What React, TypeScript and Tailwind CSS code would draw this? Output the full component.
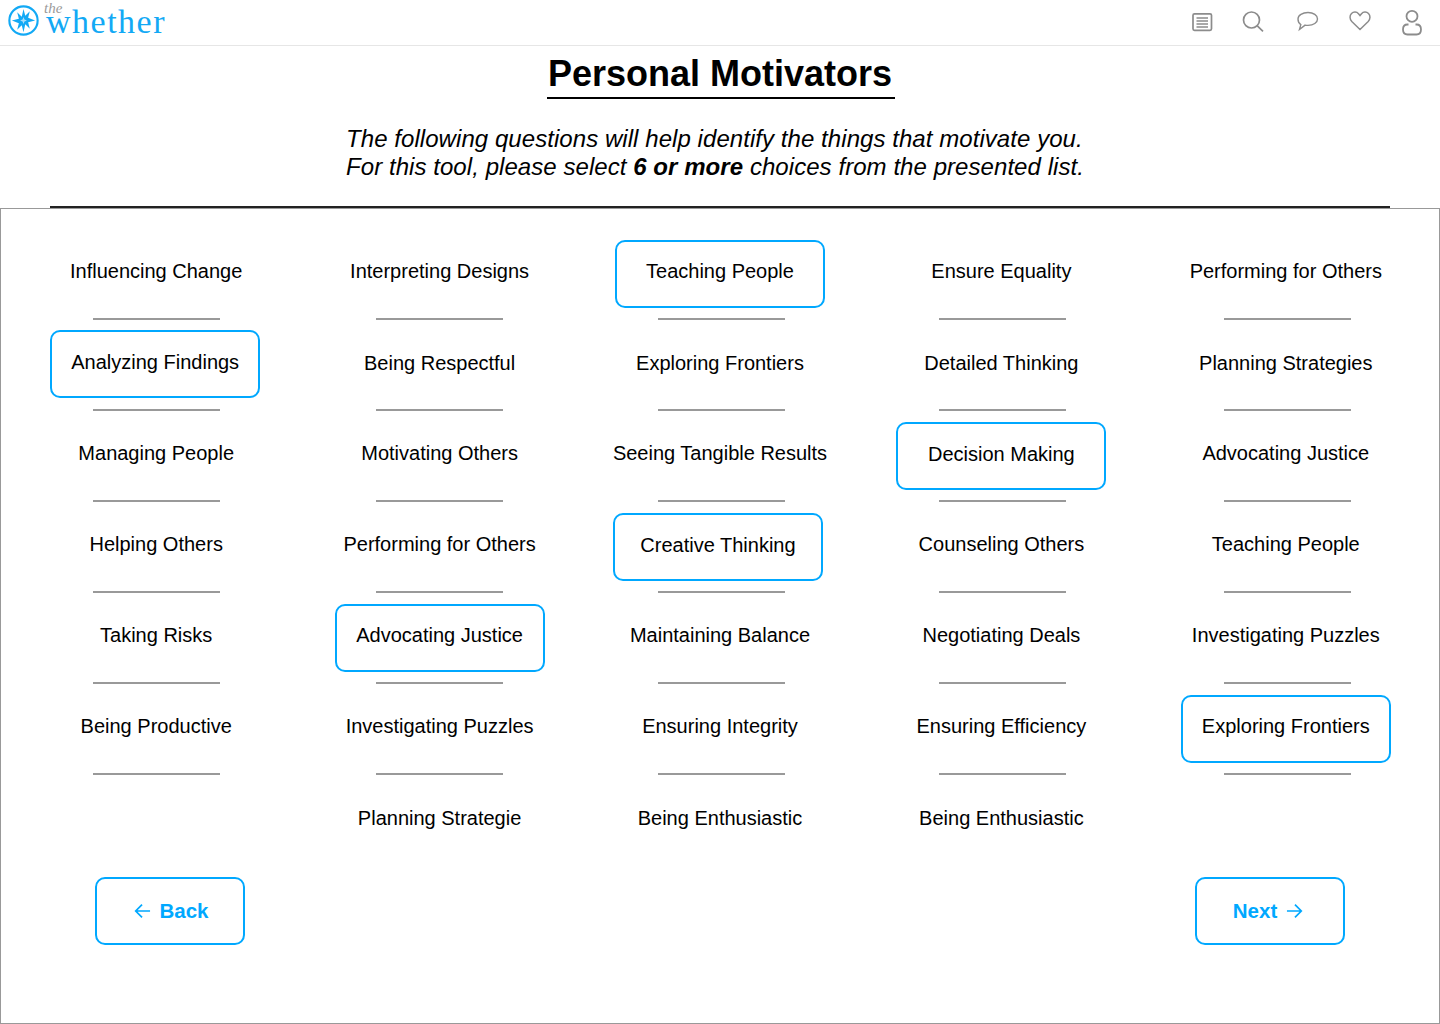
const columns = [
  {
    wrap: "",
    rule: "",
    items: [
      { label: "Influencing Change" },
      { label: "Analyzing Findings", selected: true, nudge: "-translate-x-px -translate-y-px" },
      { label: "Managing People" },
      { label: "Helping Others" },
      { label: "Taking Risks" },
      { label: "Being Productive" },
    ],
  },
  {
    wrap: "pl-[2px]",
    rule: "",
    items: [
      { label: "Interpreting Designs" },
      { label: "Being Respectful" },
      { label: "Motivating Others" },
      { label: "Performing for Others" },
      { label: "Advocating Justice", selected: true },
      { label: "Investigating Puzzles" },
      { label: "Planning Strategie" },
    ],
  },
  {
    wrap: "pr-[2px]",
    rule: "translate-x-0.5",
    items: [
      { label: "Teaching People", selected: true },
      { label: "Exploring Frontiers" },
      { label: "Seeing Tangible Results" },
      { label: "Creative Thinking", selected: true, nudge: "-translate-x-0.5" },
      { label: "Maintaining Balance" },
      { label: "Ensuring Integrity" },
      { label: "Being Enthusiastic" },
    ],
  },
  {
    wrap: "pr-[4px]",
    rule: "translate-x-px",
    items: [
      { label: "Ensure Equality" },
      { label: "Detailed Thinking" },
      { label: "Decision Making", selected: true },
      { label: "Counseling Others" },
      { label: "Negotiating Deals" },
      { label: "Ensuring Efficiency" },
      { label: "Being Enthusiastic" },
    ],
  },
  {
    wrap: "",
    rule: "translate-x-0.5",
    items: [
      { label: "Performing for Others" },
      { label: "Planning Strategies" },
      { label: "Advocating Justice" },
      { label: "Teaching People" },
      { label: "Investigating Puzzles" },
      { label: "Exploring Frontiers", selected: true },
    ],
  },
];

function Compass() {
  return (
    <svg width="31" height="31" viewBox="0 0 32 32" fill="none" className="shrink-0 -mt-[4px]">
      <circle cx="16" cy="16" r="14.6" stroke="#12a9f5" strokeWidth="2.2" />
      <path
        d="M16 4l1.800 7.200 4.700-4.700-1.700 6.700L28 16l-7.200 1.800 1.700 6.700-4.700-4.700L16 28l-1.800-7.200-4.700 4.700 1.700-6.700L4 16l7.200-1.800-1.700-6.700 4.700 4.700z"
        fill="#12a9f5"
      />
      <path d="M16 12.500l1 2.500 2.500 1-2.500 1-1 2.500-1-2.500-2.500-1 2.500-1z" fill="#a9def9" />
    </svg>
  );
}

function Logo() {
  return (
    <div className="relative flex items-center gap-[7px] pl-2">
      <Compass />
      <span className="font-['Liberation_Serif',serif] text-[34px] leading-[18px] tracking-[1.5px] text-[#12a9f5] -translate-y-px">
        whether
      </span>
      <span className="absolute left-[44px] top-[-7px] font-['Liberation_Serif',serif] italic text-[15px] leading-[12px] text-[#9a9a9a]">
        the
      </span>
    </div>
  );
}

function NavIcons() {
  return (
    <div className="flex items-center gap-[30px] pr-[18px] text-[#8c8c8c]">
      <svg width="22" height="26" viewBox="0 0 22 26" fill="none" stroke="currentColor" strokeWidth="1.700" className="overflow-visible">
        <rect x="1" y="3.800" width="18.500" height="16.500" rx="1.500" />
        <path d="M4.500 8h11.500M4.500 11h11.500M4.500 14h11.500M4.500 17h11.500" strokeWidth="1.300" />
      </svg>
      <svg width="22" height="26" viewBox="0 0 22 26" fill="none" stroke="currentColor" strokeWidth="1.700" className="overflow-visible">
        <circle cx="7.500" cy="10" r="8" />
        <path d="M13.300 15.800l5.700 5.600" />
      </svg>
      <svg width="22" height="26" viewBox="0 0 22 26" fill="none" stroke="currentColor" strokeWidth="1.400" className="overflow-visible">
        <path d="M12 2.500c5.500 0 9.500 2.800 9.500 6.400s-4 6.500-9.500 6.500c-1 0-2-.1-2.900-.3L3.500 19.500l1.300-4.900C3 13.400 2 11.300 2 8.900 2 5.300 6.500 2.500 12 2.500z" />
      </svg>
      <svg width="22" height="26" viewBox="0 0 22 26" fill="none" stroke="currentColor" strokeWidth="1.500" className="overflow-visible">
        <path d="M12 19.500L3.800 11.500C1.500 9 1.500 5.500 3.500 3.500c2-2 5.200-1.800 7 .2L12 5.500l1.500-1.800c1.800-2 5-2.200 7-.2 2 2 2 5.500-.3 8z" />
      </svg>
      <svg width="22" height="26" viewBox="0 0 22 26" fill="none" stroke="currentColor" strokeWidth="1.800" className="overflow-visible">
        <circle cx="12" cy="6.300" r="5.500" />
        <path d="M8.500 14.500H7.500C4.800 14.500 3 16.500 3 19.500s1.800 5 4.500 5h9c2.700 0 4.500-2 4.500-5s-1.800-5-4.500-5h-1" />
      </svg>
    </div>
  );
}

type ItemProps = {
  label: string;
  selected?: boolean;
  nudge?: string;
  rule: string;
  row: number;
};

function Item({ label, selected, nudge, rule, row }: ItemProps) {
  const liftSelected = row >= 1 && row <= 3;
  const liftPlain = row === 1 || row === 6;
  return (
    <div className="flex flex-col items-center h-[91px]">
      <div
        className={
          selected
            ? `h-[68px] w-[210px] rounded-[10px] border-2 border-[#00a8ff] flex items-center justify-center ${liftSelected ? "pb-[5px]" : "pb-[7px]"} ${nudge ?? ""}`
            : `h-[68px] w-[240px] flex items-center justify-center ${liftPlain ? "pb-[5px]" : "pb-[7px]"}`
        }
      >
        {label}
      </div>
      {row !== 6 && <div className={`mt-[10px] h-0.5 w-[127px] bg-[#999999] ${rule}`} />}
    </div>
  );
}

function NavButton({ label, dir }: { label: string; dir: "back" | "next" }) {
  return (
    <button
      className={`h-[68px] w-[150px] rounded-[10px] border-2 border-[#00a8ff] flex items-center justify-center text-[#00a8ff] text-[20.5px] font-bold ${
        dir === "back" ? "gap-[8px] pl-[3px]" : "gap-[9px] pr-[4px]"
      }`}
    >
      {dir === "back" && (
        <svg width="17" height="16" viewBox="0 0 18 16" fill="none" stroke="currentColor" strokeWidth="1.800">
          <path d="M17 8H2M8.500 1.200L1.800 8l6.700 6.800" />
        </svg>
      )}
      {label}
      {dir === "next" && (
        <svg width="17" height="16" viewBox="0 0 18 16" fill="none" stroke="currentColor" strokeWidth="1.800">
          <path d="M1 8h15M9.500 1.200L16.200 8l-6.700 6.800" />
        </svg>
      )}
    </button>
  );
}

export default function App() {
  return (
    <div className="w-[1440px] h-[1024px] bg-white text-black font-['Liberation_Sans',Arial,sans-serif] overflow-hidden flex flex-col">
      {/* Header */}
      <div className="h-[46px] shrink-0 border-b border-[#e6e6e6] flex items-center justify-between">
        <Logo />
        <NavIcons />
      </div>

      {/* Intro */}
      <div className="h-[162px] shrink-0 flex flex-col items-center">
        <h1 className="mt-[5px] ml-[2px] text-[36px] leading-[45px] font-bold pl-px border-b-2 border-black w-[348px] text-left whitespace-nowrap pb-[1px]">
          Personal Motivators
        </h1>
        <p className="mt-[26px] mr-[10px] w-fit text-[24px] leading-[28px] italic text-left tracking-[0.06px]">
          The following questions will help identify the things that motivate you.
          <br />
          For this tool, please select <b>6 or more</b> choices from the presented list.
        </p>
        <div className="mt-auto w-[1340px] h-0.5 bg-[#222222]" />
      </div>

      {/* Panel */}
      <div className="flex-1 border border-[#999999] pt-[31px] pl-[14px] pr-[12px] text-[20px] leading-[24px]">
        <div className="grid grid-cols-5 h-[637px]">
          {columns.map((col, i) => (
            <div key={i} className={`flex flex-col ${col.wrap}`}>
              {col.items.map((item, j) => (
                <Item key={j} {...item} rule={col.rule} row={j} />
              ))}
            </div>
          ))}
        </div>
        <div className="flex justify-between pl-[80px] pr-[82px]">
          <NavButton label="Back" dir="back" />
          <NavButton label="Next" dir="next" />
        </div>
      </div>
    </div>
  );
}
